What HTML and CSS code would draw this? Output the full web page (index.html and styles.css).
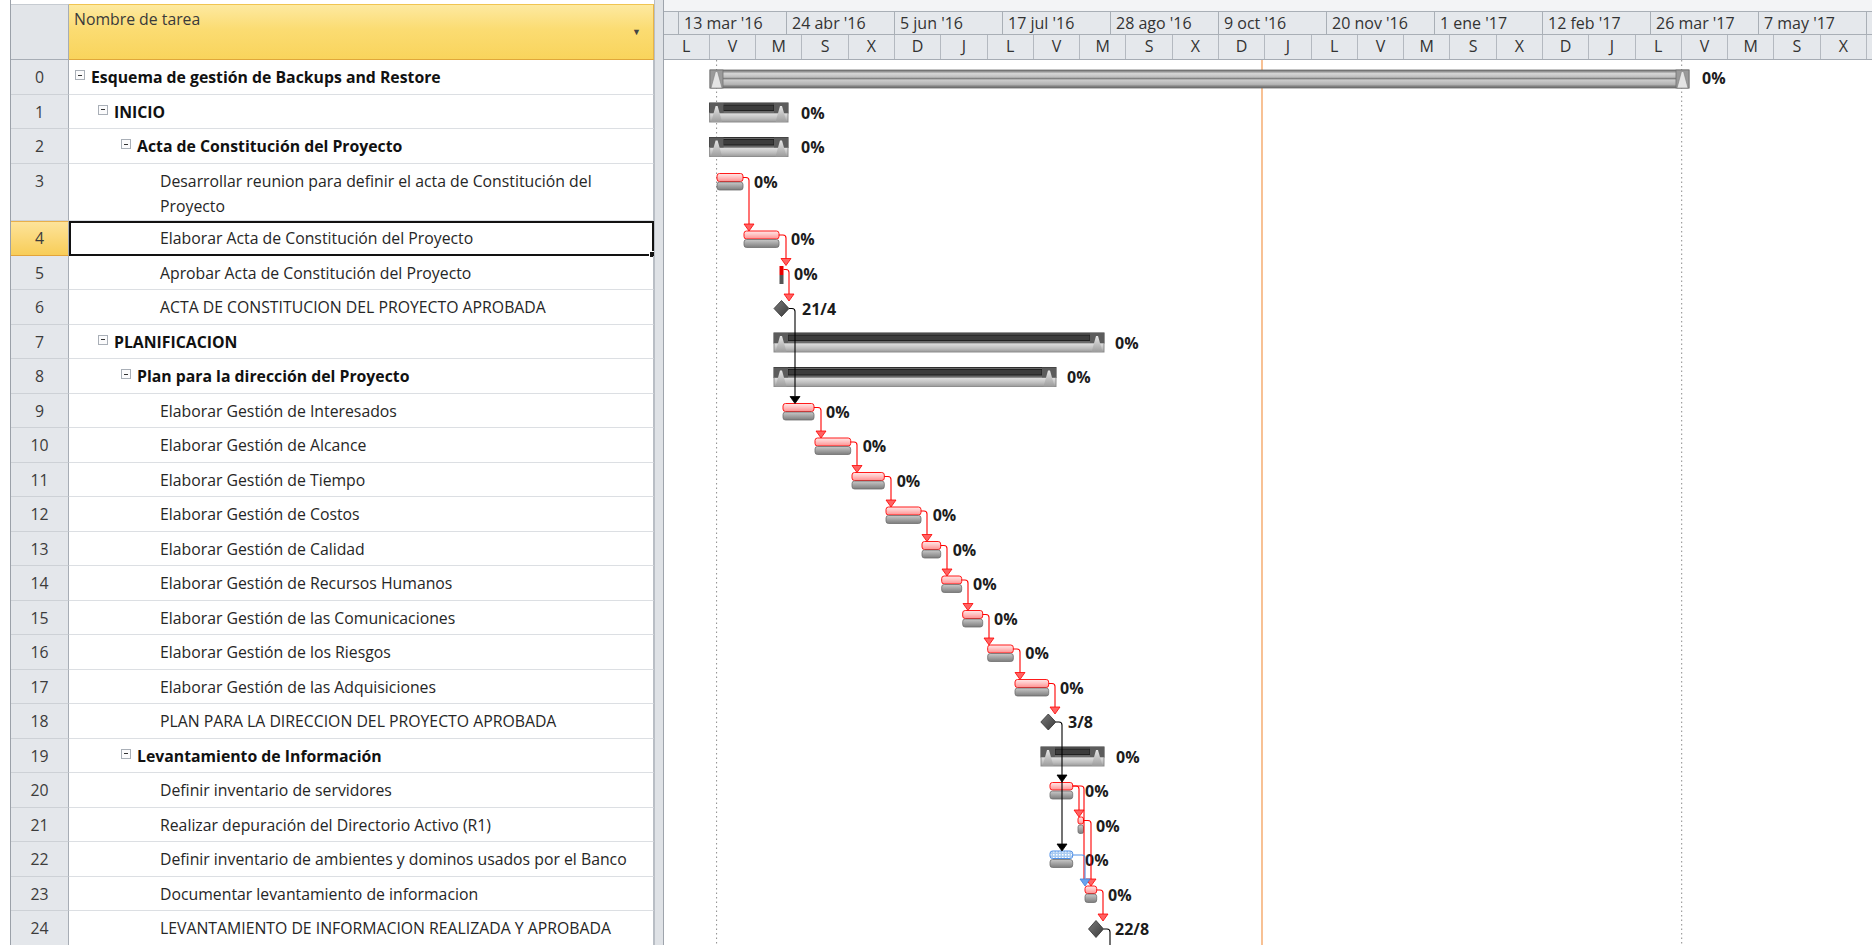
FILE: index.html
```html
<!DOCTYPE html>
<html lang="es">
<head>
<meta charset="utf-8">
<title>Esquema de gestión de Backups and Restore</title>
<link rel="stylesheet" href="styles.css">
</head>
<body>
<div class="app">
  <section class="sheet">
    <div class="sheet-head">
      <div class="corner"></div>
      <div class="col-name"><span>Nombre de tarea</span><span class="drop">▼</span></div>
    </div>
    <div class="row"><div class="num">0</div><div class="name lvl0 sum"><span class="tog"></span>Esquema de gestión de Backups and Restore</div></div>
    <div class="row"><div class="num">1</div><div class="name lvl1 sum"><span class="tog"></span>INICIO</div></div>
    <div class="row"><div class="num">2</div><div class="name lvl2 sum"><span class="tog"></span>Acta de Constitución del Proyecto</div></div>
    <div class="row tall"><div class="num">3</div><div class="name lvl3 wrap">Desarrollar reunion para definir el acta de Constitución del Proyecto</div></div>
    <div class="row active"><div class="num">4</div><div class="name lvl3 sel">Elaborar Acta de Constitución del Proyecto</div></div>
    <div class="row"><div class="num">5</div><div class="name lvl3">Aprobar Acta de Constitución del Proyecto</div></div>
    <div class="row"><div class="num">6</div><div class="name lvl3">ACTA DE CONSTITUCION DEL PROYECTO APROBADA</div></div>
    <div class="row"><div class="num">7</div><div class="name lvl1 sum"><span class="tog"></span>PLANIFICACION</div></div>
    <div class="row"><div class="num">8</div><div class="name lvl2 sum"><span class="tog"></span>Plan para la dirección del Proyecto</div></div>
    <div class="row"><div class="num">9</div><div class="name lvl3">Elaborar Gestión de Interesados</div></div>
    <div class="row"><div class="num">10</div><div class="name lvl3">Elaborar Gestión de Alcance</div></div>
    <div class="row"><div class="num">11</div><div class="name lvl3">Elaborar Gestión de Tiempo</div></div>
    <div class="row"><div class="num">12</div><div class="name lvl3">Elaborar Gestión de Costos</div></div>
    <div class="row"><div class="num">13</div><div class="name lvl3">Elaborar Gestión de Calidad</div></div>
    <div class="row"><div class="num">14</div><div class="name lvl3">Elaborar Gestión de Recursos Humanos</div></div>
    <div class="row"><div class="num">15</div><div class="name lvl3">Elaborar Gestión de las Comunicaciones</div></div>
    <div class="row"><div class="num">16</div><div class="name lvl3">Elaborar Gestión de los Riesgos</div></div>
    <div class="row"><div class="num">17</div><div class="name lvl3">Elaborar Gestión de las Adquisiciones</div></div>
    <div class="row"><div class="num">18</div><div class="name lvl3">PLAN PARA LA DIRECCION DEL PROYECTO APROBADA</div></div>
    <div class="row"><div class="num">19</div><div class="name lvl2 sum"><span class="tog"></span>Levantamiento de Información</div></div>
    <div class="row"><div class="num">20</div><div class="name lvl3">Definir inventario de servidores</div></div>
    <div class="row"><div class="num">21</div><div class="name lvl3">Realizar depuración del Directorio Activo (R1)</div></div>
    <div class="row"><div class="num">22</div><div class="name lvl3">Definir inventario de ambientes y dominos usados por el Banco</div></div>
    <div class="row"><div class="num">23</div><div class="name lvl3">Documentar levantamiento de informacion</div></div>
    <div class="row"><div class="num">24</div><div class="name lvl3">LEVANTAMIENTO DE INFORMACION REALIZADA Y APROBADA</div></div>
  </section>

  <div class="splitter"></div>

  <section class="gantt">
    <div class="timescale">
      <div class="tier tier-top">
        <div class="tcell lead"></div>
        <div class="tcell">13 mar '16</div>
        <div class="tcell">24 abr '16</div>
        <div class="tcell">5 jun '16</div>
        <div class="tcell">17 jul '16</div>
        <div class="tcell">28 ago '16</div>
        <div class="tcell">9 oct '16</div>
        <div class="tcell">20 nov '16</div>
        <div class="tcell">1 ene '17</div>
        <div class="tcell">12 feb '17</div>
        <div class="tcell">26 mar '17</div>
        <div class="tcell">7 may '17</div>
        <div class="tcell"></div>
      </div>
      <div class="tier tier-bot">
        <div class="bcell">L</div><div class="bcell">V</div><div class="bcell">M</div><div class="bcell">S</div><div class="bcell">X</div><div class="bcell">D</div><div class="bcell">J</div>
        <div class="bcell">L</div><div class="bcell">V</div><div class="bcell">M</div><div class="bcell">S</div><div class="bcell">X</div><div class="bcell">D</div><div class="bcell">J</div>
        <div class="bcell">L</div><div class="bcell">V</div><div class="bcell">M</div><div class="bcell">S</div><div class="bcell">X</div><div class="bcell">D</div><div class="bcell">J</div>
        <div class="bcell">L</div><div class="bcell">V</div><div class="bcell">M</div><div class="bcell">S</div><div class="bcell">X</div><div class="bcell"></div>
      </div>
    </div>

    <div class="chart">
      <svg width="1208" height="885" viewBox="664 60 1208 885" xmlns="http://www.w3.org/2000/svg">
        <defs>
          <linearGradient id="crit" x1="0" y1="0" x2="0" y2="1">
            <stop offset="0" stop-color="#ffe8e8"/>
            <stop offset="0.45" stop-color="#ffc4c4"/>
            <stop offset="1" stop-color="#ff8f8f"/>
          </linearGradient>
          <linearGradient id="base" x1="0" y1="0" x2="0" y2="1">
            <stop offset="0" stop-color="#c9c9c9"/>
            <stop offset="0.5" stop-color="#a3a3a3"/>
            <stop offset="1" stop-color="#7d7d7d"/>
          </linearGradient>
          <linearGradient id="sumLow" x1="0" y1="0" x2="0" y2="1">
            <stop offset="0" stop-color="#e2e2e2"/>
            <stop offset="0.6" stop-color="#bdbdbd"/>
            <stop offset="1" stop-color="#9a9a9a"/>
          </linearGradient>
          <linearGradient id="capG" x1="0" y1="0" x2="0" y2="1">
            <stop offset="0" stop-color="#e6e6e6"/>
            <stop offset="1" stop-color="#9c9c9c"/>
          </linearGradient>
          <linearGradient id="proj" x1="0" y1="0" x2="0" y2="1">
            <stop offset="0" stop-color="#6e6e6e"/>
            <stop offset="0.1" stop-color="#9a9a9a"/>
            <stop offset="0.2" stop-color="#d6d6d6"/>
            <stop offset="0.4" stop-color="#bcbcbc"/>
            <stop offset="0.47" stop-color="#808080"/>
            <stop offset="0.56" stop-color="#cccccc"/>
            <stop offset="0.8" stop-color="#b4b4b4"/>
            <stop offset="0.9" stop-color="#838383"/>
            <stop offset="1" stop-color="#6e6e6e"/>
          </linearGradient>
          <linearGradient id="ms" x1="0" y1="0" x2="1" y2="1">
            <stop offset="0" stop-color="#7a7a7a"/>
            <stop offset="1" stop-color="#3a3a3a"/>
          </linearGradient>
          <pattern id="dots" width="3" height="3" patternUnits="userSpaceOnUse">
            <rect width="3" height="3" fill="#a9cbf2"/>
            <rect width="1.5" height="1.5" fill="#ffffff"/>
          </pattern>
          <g id="cap">
            <rect x="0" y="8.5" width="14" height="10" fill="#5c5c5c"/>
            <path d="M1.5 27.5 L6 11.5 L8 11.5 L12.5 27.5 Z" fill="url(#capG)"/>
          </g>
          <g id="pcap">
            <rect x="0" y="10" width="13" height="18" fill="#9a9a9a" stroke="#707070" stroke-width=".8"/>
            <path d="M1 28 L5.5 11.5 L7.5 11.5 L12 28 Z" fill="#e4e4e4" stroke="#808080" stroke-width=".6"/>
          </g>
        </defs>

        <!-- project start / end and status date -->
        <line class="dotted" x1="716.6" y1="60" x2="716.6" y2="945"/>
        <line class="dotted" x1="1681.7" y1="60" x2="1681.7" y2="945"/>
        <line class="status" x1="1262" y1="60" x2="1262" y2="945"/>

        <!-- 0 project summary -->
        <g transform="translate(0,60)">
          <rect x="710" y="10" width="979" height="18" fill="url(#proj)" stroke="#6a6a6a" stroke-width=".8"/>
          <use href="#pcap" x="710"/>
          <use href="#pcap" x="1676"/>
          <text class="lbl" x="1702" y="18">0%</text>
        </g>

        <!-- 1 INICIO -->
        <g transform="translate(0,94.5)">
          <rect x="709.6" y="8.5" width="78.4" height="10" fill="#686868" stroke="#2f2f2f"/>
          <rect x="723.6" y="10.5" width="50.4" height="5.5" fill="#3d3d3d" stroke="#161616" stroke-width=".8"/>
          <rect x="709.6" y="18.5" width="78.4" height="9" fill="url(#sumLow)" stroke="#8e8e8e"/>
          <use href="#cap" x="709.6"/><use href="#cap" x="774"/>
          <text class="lbl" x="801" y="18">0%</text>
        </g>

        <!-- 2 Acta de Constitución -->
        <g transform="translate(0,129)">
          <rect x="709.6" y="8.5" width="78.4" height="10" fill="#686868" stroke="#2f2f2f"/>
          <rect x="723.6" y="10.5" width="50.4" height="5.5" fill="#3d3d3d" stroke="#161616" stroke-width=".8"/>
          <rect x="709.6" y="18.5" width="78.4" height="9" fill="url(#sumLow)" stroke="#8e8e8e"/>
          <use href="#cap" x="709.6"/><use href="#cap" x="774"/>
          <text class="lbl" x="801" y="18">0%</text>
        </g>

        <!-- 3 -->
        <g transform="translate(0,163.5)">
          <rect class="crit" x="717" y="10" width="26" height="8" rx="2.5"/>
          <rect class="base" x="717" y="18.5" width="26" height="8" rx="2.5"/>
          <text class="lbl" x="754" y="18">0%</text>
        </g>
        <!-- 4 -->
        <g transform="translate(0,221)">
          <rect class="crit" x="744" y="10" width="35" height="8" rx="2.5"/>
          <rect class="base" x="744" y="18.5" width="35" height="8" rx="2.5"/>
          <text class="lbl" x="791" y="18">0%</text>
        </g>
        <!-- 5 -->
        <g transform="translate(0,255.5)">
          <rect x="779.5" y="10.5" width="4" height="9" fill="#e80000"/>
          <rect x="779.5" y="19.5" width="4" height="9" fill="#555555"/>
          <text class="lbl" x="794" y="18.5">0%</text>
        </g>
        <!-- 6 milestone -->
        <g transform="translate(0,290)">
          <path class="ms" d="M781.5 10.5 L789 18.5 L781.5 26.5 L774 18.5 Z"/>
          <text class="lbl" x="802" y="18.5">21/4</text>
        </g>

        <!-- 7 PLANIFICACION -->
        <g transform="translate(0,324.5)">
          <rect x="774" y="8.5" width="330" height="10" fill="#686868" stroke="#2f2f2f"/>
          <rect x="788" y="10.5" width="302" height="5.5" fill="#3d3d3d" stroke="#161616" stroke-width=".8"/>
          <rect x="774" y="18.5" width="330" height="9" fill="url(#sumLow)" stroke="#8e8e8e"/>
          <use href="#cap" x="774"/><use href="#cap" x="1090"/>
          <text class="lbl" x="1115" y="18">0%</text>
        </g>
        <!-- 8 Plan para la dirección -->
        <g transform="translate(0,359)">
          <rect x="774" y="8.5" width="282" height="10" fill="#686868" stroke="#2f2f2f"/>
          <rect x="788" y="10.5" width="254" height="5.5" fill="#3d3d3d" stroke="#161616" stroke-width=".8"/>
          <rect x="774" y="18.5" width="282" height="9" fill="url(#sumLow)" stroke="#8e8e8e"/>
          <use href="#cap" x="774"/><use href="#cap" x="1042"/>
          <text class="lbl" x="1067" y="18">0%</text>
        </g>

        <!-- 9 .. 17 -->
        <g transform="translate(0,393.5)">
          <rect class="crit" x="783" y="10" width="31" height="8" rx="2.5"/>
          <rect class="base" x="783" y="18.5" width="31" height="8" rx="2.5"/>
          <text class="lbl" x="826" y="18">0%</text>
        </g>
        <g transform="translate(0,428)">
          <rect class="crit" x="815" y="10" width="35.7" height="8" rx="2.5"/>
          <rect class="base" x="815" y="18.5" width="35.7" height="8" rx="2.5"/>
          <text class="lbl" x="862.7" y="18">0%</text>
        </g>
        <g transform="translate(0,462.5)">
          <rect class="crit" x="852" y="10" width="32.3" height="8" rx="2.5"/>
          <rect class="base" x="852" y="18.5" width="32.3" height="8" rx="2.5"/>
          <text class="lbl" x="896.7" y="18">0%</text>
        </g>
        <g transform="translate(0,497)">
          <rect class="crit" x="886" y="10" width="35" height="8" rx="2.5"/>
          <rect class="base" x="886" y="18.5" width="35" height="8" rx="2.5"/>
          <text class="lbl" x="932.7" y="18">0%</text>
        </g>
        <g transform="translate(0,531.5)">
          <rect class="crit" x="922" y="10" width="18.7" height="8" rx="2.5"/>
          <rect class="base" x="922" y="18.5" width="18.7" height="8" rx="2.5"/>
          <text class="lbl" x="952.7" y="18">0%</text>
        </g>
        <g transform="translate(0,566)">
          <rect class="crit" x="941.7" y="10" width="20" height="8" rx="2.5"/>
          <rect class="base" x="941.7" y="18.5" width="20" height="8" rx="2.5"/>
          <text class="lbl" x="973" y="18">0%</text>
        </g>
        <g transform="translate(0,600.5)">
          <rect class="crit" x="962.7" y="10" width="20" height="8" rx="2.5"/>
          <rect class="base" x="962.7" y="18.5" width="20" height="8" rx="2.5"/>
          <text class="lbl" x="994" y="18">0%</text>
        </g>
        <g transform="translate(0,635)">
          <rect class="crit" x="987.7" y="10" width="25.6" height="8" rx="2.5"/>
          <rect class="base" x="987.7" y="18.5" width="25.6" height="8" rx="2.5"/>
          <text class="lbl" x="1025.3" y="18">0%</text>
        </g>
        <g transform="translate(0,669.5)">
          <rect class="crit" x="1015" y="10" width="33.7" height="8" rx="2.5"/>
          <rect class="base" x="1015" y="18.5" width="33.7" height="8" rx="2.5"/>
          <text class="lbl" x="1060" y="18">0%</text>
        </g>
        <!-- 18 milestone -->
        <g transform="translate(0,704)">
          <path class="ms" d="M1048.3 10 L1055.8 18 L1048.3 26 L1040.8 18 Z"/>
          <text class="lbl" x="1068" y="18">3/8</text>
        </g>
        <!-- 19 Levantamiento -->
        <g transform="translate(0,738.5)">
          <rect x="1041" y="8.5" width="63" height="10" fill="#686868" stroke="#2f2f2f"/>
          <rect x="1055" y="10.5" width="35" height="5.5" fill="#3d3d3d" stroke="#161616" stroke-width=".8"/>
          <rect x="1041" y="18.5" width="63" height="9" fill="url(#sumLow)" stroke="#8e8e8e"/>
          <use href="#cap" x="1041"/><use href="#cap" x="1090"/>
          <text class="lbl" x="1116" y="18">0%</text>
        </g>
        <!-- 20 -->
        <g transform="translate(0,773)">
          <rect class="crit" x="1050" y="9.5" width="22.7" height="7.5" rx="2.5"/>
          <rect class="base" x="1050" y="18" width="22.7" height="8" rx="2.5"/>
          <text class="lbl" x="1085" y="18">0%</text>
        </g>
        <!-- 21 -->
        <g transform="translate(0,807.5)">
          <rect class="crit" x="1078" y="9.5" width="5.5" height="7" rx="2"/>
          <rect class="base" x="1078" y="17.5" width="5.5" height="8.5" rx="2"/>
          <text class="lbl" x="1096" y="18">0%</text>
        </g>
        <!-- 22 -->
        <g transform="translate(0,842)">
          <rect x="1050" y="9" width="22.7" height="7.5" rx="2.5" fill="url(#dots)" stroke="#4f8fe6"/>
          <rect class="base" x="1050" y="17.5" width="22.7" height="8" rx="2.5"/>
          <text class="lbl" x="1085" y="18">0%</text>
        </g>
        <!-- 23 -->
        <g transform="translate(0,876.5)">
          <rect class="crit" x="1085" y="9.5" width="11.7" height="7.5" rx="2.5"/>
          <rect class="base" x="1085" y="17.5" width="11.7" height="8.5" rx="2.5"/>
          <text class="lbl" x="1108" y="18">0%</text>
        </g>
        <!-- 24 milestone -->
        <g transform="translate(0,911)">
          <path class="ms" d="M1096 9.5 L1103.5 18 L1096 26.5 L1088.5 18 Z"/>
          <text class="lbl" x="1115" y="18">22/8</text>
        </g>

        <!-- dependency links -->
        <g class="link red">
          <path d="M743 177.5 H746 Q749 177.5 749 180.5 V224"/>
          <path d="M779 235 H783 Q786 235 786 238 V258.5"/>
          <path d="M783.5 269.5 H786 Q789 269.5 789 272.5 V294"/>
          <path d="M814 407.5 H818 Q821 407.5 821 410.5 V431"/>
          <path d="M850.7 442 H854 Q857 442 857 445 V465.5"/>
          <path d="M884.3 476.5 H888 Q891 476.5 891 479.5 V500"/>
          <path d="M921 511 H924 Q927 511 927 514 V534.5"/>
          <path d="M940.7 545.5 H944 Q947 545.5 947 548.5 V569"/>
          <path d="M961.7 580 H965 Q968 580 968 583 V603.5"/>
          <path d="M982.7 614.5 H986 Q989 614.5 989 617.5 V638"/>
          <path d="M1013.3 649 H1017 Q1020 649 1020 652 V672.5"/>
          <path d="M1048.7 683.5 H1052 Q1055 683.5 1055 686.5 V707"/>
          <path d="M1072.7 786 H1076 Q1079 786 1079 789 V810"/>
          <path d="M1072.7 786 H1081 Q1084 786 1084 789 V879"/>
          <path d="M1083.5 820.5 H1088 Q1091 820.5 1091 823.5 V879"/>
          <path d="M1096.7 890 H1100 Q1103 890 1103 893 V914"/>
        </g>
        <g class="head red">
          <path d="M744 224 H754 L749 231 Z"/>
          <path d="M781 258.5 H791 L786 265.5 Z"/>
          <path d="M784 294 H794 L789 301 Z"/>
          <path d="M816 431 H826 L821 438 Z"/>
          <path d="M852 465.5 H862 L857 472.5 Z"/>
          <path d="M886 500 H896 L891 507 Z"/>
          <path d="M922 534.5 H932 L927 541.5 Z"/>
          <path d="M942 569 H952 L947 576 Z"/>
          <path d="M963 603.5 H973 L968 610.5 Z"/>
          <path d="M984 638 H994 L989 645 Z"/>
          <path d="M1015 672.5 H1025 L1020 679.5 Z"/>
          <path d="M1050 707 H1060 L1055 714 Z"/>
          <path d="M1074 810 H1084 L1079 817 Z"/>
          <path d="M1086 879 H1096 L1091 886 Z"/>
          <path d="M1098 914 H1108 L1103 921 Z"/>
        </g>
        <g class="link black">
          <path d="M789 308.5 H792 Q795 308.5 795 311.5 V396.5"/>
          <path d="M1055.8 722 H1059 Q1062 722 1062 725 V844"/>
          <path d="M1103.5 929 H1107 Q1110 929 1110 932 V946"/>
        </g>
        <g class="head black">
          <path d="M790 396.5 H800 L795 403.5 Z"/>
          <path d="M1057 775 H1067 L1062 782 Z"/>
          <path d="M1057 844 H1067 L1062 851 Z"/>
        </g>
        <g class="link blue">
          <path d="M1072.7 855 H1082 Q1085 855 1085 858 V879"/>
        </g>
        <g class="head blue">
          <path d="M1080 879 H1090 L1085 886 Z"/>
        </g>
      </svg>
    </div>
  </section>
</div>
</body>
</html>
```

FILE: styles.css
```css
* {
  box-sizing: border-box;
  margin: 0;
  padding: 0;
}

html,
body {
  width: 1872px;
  height: 945px;
  overflow: hidden;
  background: #ffffff;
}

body {
  font-family: "Open Sans", "Noto Sans", sans-serif;
  font-size: 15.8px;
  color: #262626;
}

.app {
  display: flex;
  height: 945px;
  padding-left: 10px;
}

/* ---------- task sheet ---------- */
.sheet {
  flex: none;
  width: 644px;
  display: flex;
  flex-direction: column;
  border-left: 1px solid #9ba1a9;
  overflow: hidden;
}

.sheet-head {
  flex: none;
  display: grid;
  grid-template-columns: 58px 1fr;
  height: 60px;
  padding-top: 4px;
}

.corner {
  background: #e2e5e9;
  border-top: 1px solid #c6cbd1;
  border-right: 1px solid #a7adb5;
  border-bottom: 1px solid #a7adb5;
}

.col-name {
  display: flex;
  justify-content: space-between;
  align-items: flex-start;
  padding: 3px 12px 0 5px;
  line-height: 22px;
  color: #3a3a3a;
  background: linear-gradient(#fde9a0, #fbdc72 45%, #f9d45c);
  border-top: 1px solid #f0c451;
  border-right: 1px solid #e8b445;
  border-bottom: 1px solid #e0a73a;
}

.drop {
  font-size: 9px;
  margin-top: 13px;
  color: #444;
}

.row {
  flex: none;
  display: grid;
  grid-template-columns: 58px 1fr;
  height: 34.5px;
}

.row.tall {
  height: 57.5px;
}

.num {
  background: #e4e7eb;
  border-right: 1px solid #a7adb5;
  border-bottom: 1px solid #cdd1d6;
  text-align: center;
  padding-top: 5px;
  line-height: 25px;
  color: #3c3c3c;
}

.row.active .num {
  background: linear-gradient(#fde39a, #f8cd58);
  border-bottom-color: #e3a43a;
  border-top: 1px solid #e9b04a;
  padding-top: 4px;
}

.name {
  position: relative;
  padding: 5px 12px 0 91px;
  line-height: 25px;
  white-space: nowrap;
  overflow: visible;
  border-bottom: 1px solid #dcdfe3;
  border-right: 1px solid #b9bec5;
  color: #262626;
}

.name.wrap {
  white-space: normal;
}

.name.sum {
  font-weight: 700;
  color: #111;
}

.lvl0 { padding-left: 22px; }
.lvl1 { padding-left: 45px; }
.lvl2 { padding-left: 68px; }
.lvl3 { padding-left: 91px; }

.tog {
  display: inline-block;
  position: relative;
  width: 10px;
  height: 10px;
  margin-left: -16px;
  margin-right: 6px;
  vertical-align: 3px;
  border: 1px solid #a9afb7;
  background: #fbfbfc;
}

.tog::after {
  content: "";
  position: absolute;
  left: 2px;
  top: 3.5px;
  width: 4px;
  height: 1px;
  background: #333;
}

.name.sel {
  outline: 2px solid #121212;
  outline-offset: -2px;
  border-bottom-color: #121212;
}

.name.sel::after {
  content: "";
  position: absolute;
  right: -3px;
  bottom: -3px;
  width: 5px;
  height: 5px;
  background: #121212;
  border: 1px solid #fff;
}

/* ---------- splitter ---------- */
.splitter {
  flex: none;
  width: 10px;
  background: #dfe2e6;
  border-left: 1px solid #b9bec5;
  border-right: 1px solid #9ea4ac;
}

/* ---------- gantt ---------- */
.gantt {
  flex: 1;
  display: flex;
  flex-direction: column;
  overflow: hidden;
  min-width: 0;
}

.timescale {
  flex: none;
  height: 60px;
  padding-top: 11px;
  background: #f3f4f6;
  border-bottom: 1px solid #a6acb4;
  overflow: hidden;
  font-size: 16px;
}

.tier {
  display: flex;
  height: 24px;
  white-space: nowrap;
  background: #e5e8ec;
  color: #333;
}

.tier-top {
  border-top: 1px solid #a9afb6;
  border-bottom: 1px solid #a9afb6;
}

.tcell {
  flex: none;
  width: 108px;
  padding-left: 5px;
  line-height: 22px;
  border-left: 1px solid #a9afb6;
}

.tcell.lead {
  width: 14px;
  border-left: none;
}

.bcell {
  flex: none;
  width: 46.286px;
  text-align: center;
  line-height: 23px;
  border-left: 1px solid #b4b9c0;
}

.bcell:first-child {
  margin-left: -1.4px;
}

.chart {
  flex: 1;
  background: #ffffff;
}

.chart svg {
  display: block;
}

.dotted {
  stroke: #8c8c8c;
  stroke-width: 1;
  stroke-dasharray: 1.5 3;
}

.status {
  stroke: #f6b27a;
  stroke-width: 1.6;
}

.crit {
  fill: url(#crit);
  stroke: #ff1a1a;
  stroke-width: 1;
}

.base {
  fill: url(#base);
  stroke: #6d6d6d;
  stroke-width: 0.8;
}

.ms {
  fill: url(#ms);
  stroke: #2e2e2e;
  stroke-width: 0.8;
}

.lbl {
  font-family: "Open Sans", "Noto Sans", sans-serif;
  font-weight: 700;
  font-size: 16px;
  fill: #1c1c1c;
  dominant-baseline: central;
}

.link {
  fill: none;
  stroke-width: 1.1;
}

.link.red { stroke: #ff0000; }
.link.black { stroke: #000000; }
.link.blue { stroke: #4f8fe6; }

.head {
  stroke-width: 0.8;
  stroke-linejoin: round;
}

.head.red { fill: #ff6262; stroke: #ff0000; }
.head.black { fill: #000000; stroke: #000000; }
.head.blue { fill: #6aa3ee; stroke: #3f7fd8; }
```
